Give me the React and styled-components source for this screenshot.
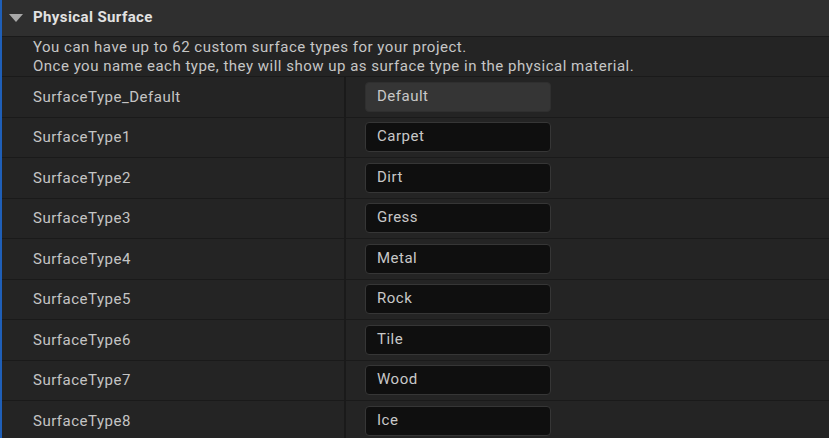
import React from "react";
import styled, { createGlobalStyle } from "styled-components";

const GlobalStyle = createGlobalStyle`
  html, body {
    margin: 0;
    padding: 0;
    background: #1a1a1a;
  }
  body {
    font-family: Roboto, "Liberation Sans", sans-serif;
    font-size: 15px;
    letter-spacing: 0.5px;
    color: #c0c0c0;
    overflow: hidden;
  }
`;

const Panel = styled.div`
  width: 829px;
  height: 438px;
  overflow: hidden;
  border-left: 2px solid #1f5fb8;
  box-sizing: border-box;
  background: #1a1a1a;
`;

const Header = styled.div`
  display: flex;
  align-items: center;
  height: 36px;
  background: #2f2f2f;
  border-bottom: 1px solid #1a1a1a;
  padding-left: 6px;
  gap: 9px;
`;

const Arrow = styled.svg`
  width: 16px;
  height: 10px;
  flex-shrink: 0;
`;

const Title = styled.div`
  font-weight: 700;
  font-size: 15px;
  letter-spacing: 0.4px;
  color: #e2e2e2;
  padding-bottom: 2px;
`;

const Description = styled.div`
  height: 40px;
  box-sizing: border-box;
  background: #242424;
  border-bottom: 1px solid #1a1a1a;
  padding: 1px 0 0 31px;
  line-height: 19px;
  color: #c6c6c6;
`;

const Row = styled.div`
  display: grid;
  grid-template-columns: 344px 1fr;
  height: 40.5px;
  box-sizing: border-box;
  border-bottom: 1px solid #1a1a1a;
`;

const NameCell = styled.div`
  display: flex;
  align-items: center;
  padding-left: 31px;
  background: #242424;
  border-right: 2px solid #1a1a1a;
  color: #c4c4c4;
`;

const ValueCell = styled.div`
  display: flex;
  align-items: center;
  padding-left: 19px;
  background: #242424;
`;

const Field = styled.div`
  width: 186px;
  height: 30px;
  box-sizing: border-box;
  border-radius: 4px;
  border: 1px solid ${(p) => (p.$readonly ? "#2f2f2f" : "#363636")};
  background: ${(p) => (p.$readonly ? "#353535" : "#0f0f0f")};
  color: #c8c8c8;
  padding: 4px 0 0 11px;
  line-height: 19px;
`;

const rows = [
  ["SurfaceType_Default", "Default", true],
  ["SurfaceType1", "Carpet"],
  ["SurfaceType2", "Dirt"],
  ["SurfaceType3", "Gress"],
  ["SurfaceType4", "Metal"],
  ["SurfaceType5", "Rock"],
  ["SurfaceType6", "Tile"],
  ["SurfaceType7", "Wood"],
  ["SurfaceType8", "Ice"],
];

export default function App() {
  return (
    <>
      <GlobalStyle />
      <Panel>
        <Header>
          <Arrow viewBox="0 0 16 10">
            <path d="M1 1 L15 1 L8 9 Z" fill="#a8a8a8" />
          </Arrow>
          <Title>Physical Surface</Title>
        </Header>
        <Description>
          You can have up to 62 custom surface types for your project.
          <br />
          Once you name each type, they will show up as surface type in the
          physical material.
        </Description>
        {rows.map(([name, value, readonly]) => (
          <Row key={name}>
            <NameCell>{name}</NameCell>
            <ValueCell>
              <Field $readonly={readonly}>{value}</Field>
            </ValueCell>
          </Row>
        ))}
      </Panel>
    </>
  );
}
